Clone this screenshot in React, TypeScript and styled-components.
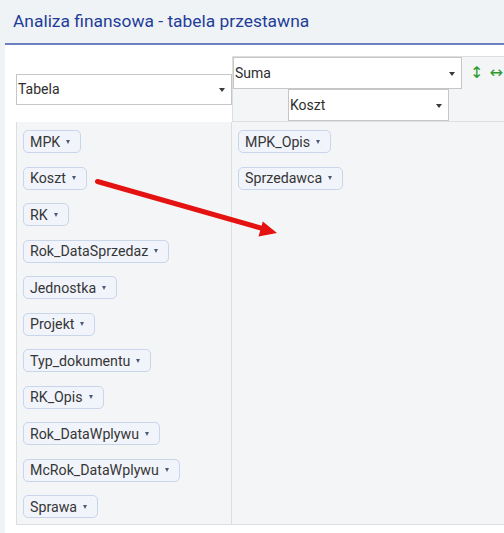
import React from "react";
import styled, { createGlobalStyle } from "styled-components";

const GlobalStyle = createGlobalStyle`
  html, body {
    margin: 0;
    padding: 0;
    background: #eff3f5;
    font-family: Roboto, "Liberation Sans", Arial, sans-serif;
    overflow: hidden;
  }
  * { box-sizing: border-box; }
`;

const Page = styled.div`
  position: relative;
  padding-left: 5px;
  height: 533px;
  display: flex;
  flex-direction: column;
`;

const Header = styled.header`
  height: 45px;
  padding: 10px 0 0 8px;
  border-bottom: 2px solid #6c7fbf;
`;

const Title = styled.h1`
  margin: 0;
  font-size: 17.4px;
  font-weight: 400;
  line-height: 22px;
  color: #1f3d99;
`;

const Content = styled.main`
  flex: 1;
  background: #ffffff;
  padding: 11px 0 0 11px;
`;

const Pivot = styled.div`
  display: grid;
  grid-template-columns: 216px 290px;
  grid-template-rows: auto auto;
`;

const RendererCell = styled.div`
  display: flex;
  align-items: center;
`;

const AggregatorCell = styled.div`
  background: #f3f5f6;
  border: 1px solid #dcdfe1;
  border-right: none;
  text-align: center;
`;

const AggLine = styled.div`
  display: flex;
  align-items: center;
`;

const SelectBox = styled.div<{ $w: number; $h: number }>`
  position: relative;
  width: ${(p) => p.$w}px;
  height: ${(p) => p.$h}px;
  background: #ffffff;
  border: 1px solid #c6c6c6;
  display: flex;
  align-items: center;
  padding-left: 1px;
  font-size: 14px;
  color: #2e2e2e;
  text-align: left;
  flex: none;

  &::after {
    content: "";
    position: absolute;
    right: 6px;
    top: 50%;
    margin-top: -1px;
    border-left: 3.5px solid transparent;
    border-right: 3.5px solid transparent;
    border-top: 4px solid #3a3a3a;
  }
`;

const CenteredSelect = styled(SelectBox)`
  margin: 0 auto 0 55px;
`;

const OrderArrow = styled.span<{ $ml: number }>`
  margin-left: ${(p) => p.$ml}px;
  color: #2d9a2d;
  font-size: 16px;
  line-height: 1;
  font-family: "DejaVu Sans", sans-serif;
`;

const AxisColumn = styled.ul<{ $left?: boolean }>`
  list-style: none;
  margin: 0;
  padding: 8px 6px 6px 6px;
  background: #f3f5f6;
  border: 1px solid #dcdfe1;
  border-top: none;
  border-left: ${(p) => (p.$left ? "1px solid #dcdfe1" : "none")};
  border-right: ${(p) => (p.$left ? "1px solid #dcdfe1" : "none")};
  display: flex;
  flex-direction: column;
  align-items: flex-start;
  gap: 13.5px;
`;

const Pill = styled.li`
  display: inline-flex;
  align-items: center;
  height: 23px;
  padding: 0 10px 0 6px;
  border: 1px solid #c9d5e8;
  border-radius: 5px;
  background: #f1f4fa;
  font-size: 14.2px;
  color: #363636;
  white-space: nowrap;
`;

const Caret = styled.span`
  margin-left: 6px;
  width: 0;
  height: 0;
  border-left: 2.5px solid transparent;
  border-right: 2.5px solid transparent;
  border-top: 4px solid #4c5b76;
`;

const Pointer = styled.svg`
  position: absolute;
  left: 0;
  top: 0;
  pointer-events: none;
`;

const rowAttrs = [
  "MPK",
  "Koszt",
  "RK",
  "Rok_DataSprzedaz",
  "Jednostka",
  "Projekt",
  "Typ_dokumentu",
  "RK_Opis",
  "Rok_DataWplywu",
  "McRok_DataWplywu",
  "Sprawa",
];

const colAttrs = ["MPK_Opis", "Sprzedawca"];

const AttrPill = ({ name }: { name: string }) => (
  <Pill>
    {name}
    <Caret />
  </Pill>
);

export default function App() {
  return (
    <>
      <GlobalStyle />
      <Page>
        <Header>
          <Title>Analiza finansowa - tabela przestawna</Title>
        </Header>
        <Content>
          <Pivot>
            <RendererCell>
              <SelectBox $w={216} $h={31}>Tabela</SelectBox>
            </RendererCell>
            <AggregatorCell>
              <AggLine>
                <SelectBox $w={229} $h={32}>Suma</SelectBox>
                <OrderArrow $ml={8}>↕</OrderArrow>
                <OrderArrow $ml={6}>↔</OrderArrow>
              </AggLine>
              <CenteredSelect $w={161} $h={32}>Koszt</CenteredSelect>
            </AggregatorCell>
            <AxisColumn $left>
              {rowAttrs.map((a) => (
                <AttrPill key={a} name={a} />
              ))}
            </AxisColumn>
            <AxisColumn>
              {colAttrs.map((a) => (
                <AttrPill key={a} name={a} />
              ))}
            </AxisColumn>
          </Pivot>
        </Content>
        <Pointer width="504" height="533" viewBox="0 0 504 533">
          <line
            x1="97.5"
            y1="181.5"
            x2="263"
            y2="228.7"
            stroke="#e51212"
            strokeWidth="5"
            strokeLinecap="round"
          />
          <polygon points="277,233 258.5,236.5 262.8,221.5" fill="#e51212" />
        </Pointer>
      </Page>
    </>
  );
}
